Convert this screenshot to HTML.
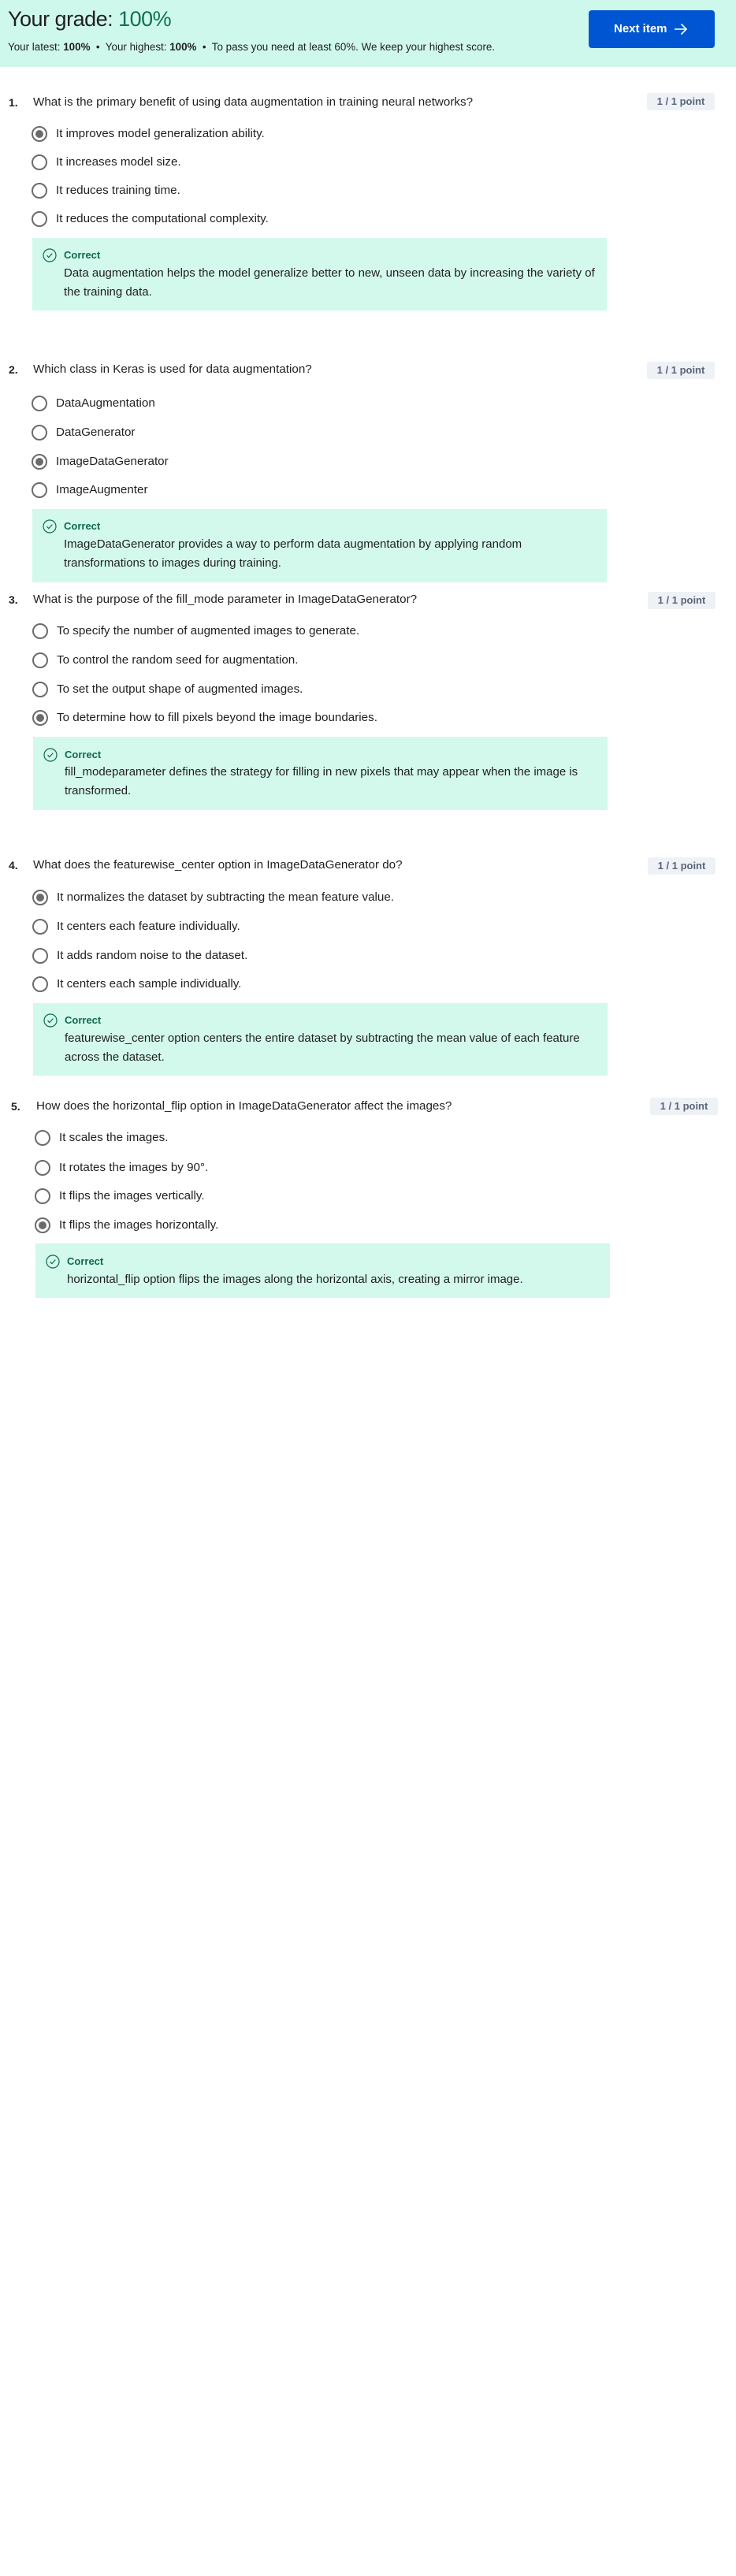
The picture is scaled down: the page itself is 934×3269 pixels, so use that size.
<!DOCTYPE html>
<html><head><meta charset="utf-8"><style>
*{margin:0;padding:0;box-sizing:border-box}
body{width:934px;height:3269px;background:#fff;position:relative;font-family:"Liberation Sans",sans-serif;color:#1f1f1f;overflow:hidden}
.a{position:absolute;white-space:nowrap;line-height:20px}
.hdr{position:absolute;left:0;top:0;width:934px;height:85px;background:#cff8ec}
.btn{position:absolute;left:747px;top:13px;width:160px;height:48px;background:#0056d2;border-radius:4px;color:#fff;font-weight:bold;font-size:15px}
.q{font-size:15.2px}
.n{font-size:14px;font-weight:bold}
.o{font-size:15.2px}
.badge{position:absolute;width:86px;height:22px;background:#eef2f7;border-radius:3px;color:#5b6577;font-weight:bold;font-size:13px;text-align:center;line-height:22px}
.r{position:absolute;width:20px;height:20px;border:2px solid #6b6b6b;border-radius:50%}
.r.s::after{content:"";position:absolute;left:3px;top:3px;width:10px;height:10px;border-radius:50%;background:#6b6b6b}
.box{position:absolute;background:#d3f8ec}
.ic{position:absolute;width:18px;height:18px}
.c{font-size:13px;font-weight:bold;color:#0f6b47}
.b{font-size:15px}
</style></head><body>
<div class="hdr"></div>
<div class="a" style="left:10px;top:8px;font-size:27px;line-height:32px;letter-spacing:-0.5px">Your grade: <span style="color:#0f7150">100%</span></div>
<div class="a" style="left:10px;top:50px;font-size:13.4px">Your latest: <b>100%</b> &nbsp;•&nbsp; Your highest: <b>100%</b> &nbsp;•&nbsp; To pass you need at least 60%. We keep your highest score.</div>
<div class="btn"><span class="a" style="left:32px;top:14px">Next item</span>
<svg style="position:absolute;left:108px;top:15px" width="18" height="18" viewBox="0 0 18 18" fill="none" stroke="#fff" stroke-width="1.6"><path d="M1 9h15M9.5 2.5L16 9l-6.5 6.5"/></svg></div>

<!-- Q1 -->
<div class="a n" style="left:11px;top:120px">1.</div>
<div class="a q" style="left:42px;top:120px">What is the primary benefit of using data augmentation in training neural networks?</div>
<div class="badge" style="left:821px;top:118px">1 / 1 point</div>
<div class="r s" style="left:40px;top:160px"></div><div class="a o" style="left:71px;top:160px">It improves model generalization ability.</div>
<div class="r" style="left:40px;top:196px"></div><div class="a o" style="left:71px;top:196px">It increases model size.</div>
<div class="r" style="left:40px;top:232px"></div><div class="a o" style="left:71px;top:232px">It reduces training time.</div>
<div class="r" style="left:40px;top:268px"></div><div class="a o" style="left:71px;top:268px">It reduces the computational complexity.</div>
<div class="box" style="left:41px;top:302px;width:729px;height:92px"></div>
<svg class="ic" style="left:54px;top:315px" viewBox="0 0 18 18" fill="none" stroke="#0f6b47" stroke-width="1.2"><circle cx="9" cy="9" r="8"/><path d="M5.5 9.2l2.3 2.4 4.5-5"/></svg>
<div class="a c" style="left:81px;top:314px">Correct</div>
<div class="a b" style="left:81px;top:337px">Data augmentation helps the model generalize better to new, unseen data by increasing the variety of</div>
<div class="a b" style="left:81px;top:361px">the training data.</div>

<!-- Q2 -->
<div class="a n" style="left:11px;top:459px">2.</div>
<div class="a q" style="left:42px;top:459px">Which class in Keras is used for data augmentation?</div>
<div class="badge" style="left:821px;top:459px">1 / 1 point</div>
<div class="r" style="left:40px;top:502px"></div><div class="a o" style="left:71px;top:502px">DataAugmentation</div>
<div class="r" style="left:40px;top:539px"></div><div class="a o" style="left:71px;top:539px">DataGenerator</div>
<div class="r s" style="left:40px;top:576px"></div><div class="a o" style="left:71px;top:576px">ImageDataGenerator</div>
<div class="r" style="left:40px;top:612px"></div><div class="a o" style="left:71px;top:612px">ImageAugmenter</div>
<div class="box" style="left:41px;top:646px;width:729px;height:93px"></div>
<svg class="ic" style="left:54px;top:659px" viewBox="0 0 18 18" fill="none" stroke="#0f6b47" stroke-width="1.2"><circle cx="9" cy="9" r="8"/><path d="M5.5 9.2l2.3 2.4 4.5-5"/></svg>
<div class="a c" style="left:81px;top:658px">Correct</div>
<div class="a b" style="left:81px;top:681px">ImageDataGenerator provides a way to perform data augmentation by applying random</div>
<div class="a b" style="left:81px;top:705px">transformations to images during training.</div>

<!-- Q3 -->
<div class="a n" style="left:11px;top:751px">3.</div>
<div class="a q" style="left:42px;top:751px">What is the purpose of the fill_mode parameter in ImageDataGenerator?</div>
<div class="badge" style="left:822px;top:751px">1 / 1 point</div>
<div class="r" style="left:41px;top:791px"></div><div class="a o" style="left:72px;top:791px">To specify the number of augmented images to generate.</div>
<div class="r" style="left:41px;top:828px"></div><div class="a o" style="left:72px;top:828px">To control the random seed for augmentation.</div>
<div class="r" style="left:41px;top:865px"></div><div class="a o" style="left:72px;top:865px">To set the output shape of augmented images.</div>
<div class="r s" style="left:41px;top:901px"></div><div class="a o" style="left:72px;top:901px">To determine how to fill pixels beyond the image boundaries.</div>
<div class="box" style="left:42px;top:935px;width:729px;height:93px"></div>
<svg class="ic" style="left:55px;top:949px" viewBox="0 0 18 18" fill="none" stroke="#0f6b47" stroke-width="1.2"><circle cx="9" cy="9" r="8"/><path d="M5.5 9.2l2.3 2.4 4.5-5"/></svg>
<div class="a c" style="left:82px;top:948px">Correct</div>
<div class="a b" style="left:82px;top:970px">fill_modeparameter defines the strategy for filling in new pixels that may appear when the image is</div>
<div class="a b" style="left:82px;top:994px">transformed.</div>

<!-- Q4 -->
<div class="a n" style="left:11px;top:1088px">4.</div>
<div class="a q" style="left:42px;top:1088px">What does the featurewise_center option in ImageDataGenerator do?</div>
<div class="badge" style="left:822px;top:1088px">1 / 1 point</div>
<div class="r s" style="left:41px;top:1129px"></div><div class="a o" style="left:72px;top:1129px">It normalizes the dataset by subtracting the mean feature value.</div>
<div class="r" style="left:41px;top:1166px"></div><div class="a o" style="left:72px;top:1166px">It centers each feature individually.</div>
<div class="r" style="left:41px;top:1203px"></div><div class="a o" style="left:72px;top:1203px">It adds random noise to the dataset.</div>
<div class="r" style="left:41px;top:1239px"></div><div class="a o" style="left:72px;top:1239px">It centers each sample individually.</div>
<div class="box" style="left:42px;top:1273px;width:729px;height:92px"></div>
<svg class="ic" style="left:55px;top:1286px" viewBox="0 0 18 18" fill="none" stroke="#0f6b47" stroke-width="1.2"><circle cx="9" cy="9" r="8"/><path d="M5.5 9.2l2.3 2.4 4.5-5"/></svg>
<div class="a c" style="left:82px;top:1285px">Correct</div>
<div class="a b" style="left:82px;top:1308px">featurewise_center option centers the entire dataset by subtracting the mean value of each feature</div>
<div class="a b" style="left:82px;top:1332px">across the dataset.</div>

<!-- Q5 -->
<div class="a n" style="left:14px;top:1394px">5.</div>
<div class="a q" style="left:46px;top:1394px">How does the horizontal_flip option in ImageDataGenerator affect the images?</div>
<div class="badge" style="left:825px;top:1393px">1 / 1 point</div>
<div class="r" style="left:44px;top:1434px"></div><div class="a o" style="left:75px;top:1434px">It scales the images.</div>
<div class="r" style="left:44px;top:1472px"></div><div class="a o" style="left:75px;top:1472px">It rotates the images by 90°.</div>
<div class="r" style="left:44px;top:1508px"></div><div class="a o" style="left:75px;top:1508px">It flips the images vertically.</div>
<div class="r s" style="left:44px;top:1545px"></div><div class="a o" style="left:75px;top:1545px">It flips the images horizontally.</div>
<div class="box" style="left:45px;top:1578px;width:729px;height:69px"></div>
<svg class="ic" style="left:58px;top:1592px" viewBox="0 0 18 18" fill="none" stroke="#0f6b47" stroke-width="1.2"><circle cx="9" cy="9" r="8"/><path d="M5.5 9.2l2.3 2.4 4.5-5"/></svg>
<div class="a c" style="left:85px;top:1591px">Correct</div>
<div class="a b" style="left:85px;top:1614px">horizontal_flip option flips the images along the horizontal axis, creating a mirror image.</div>
</body></html>
